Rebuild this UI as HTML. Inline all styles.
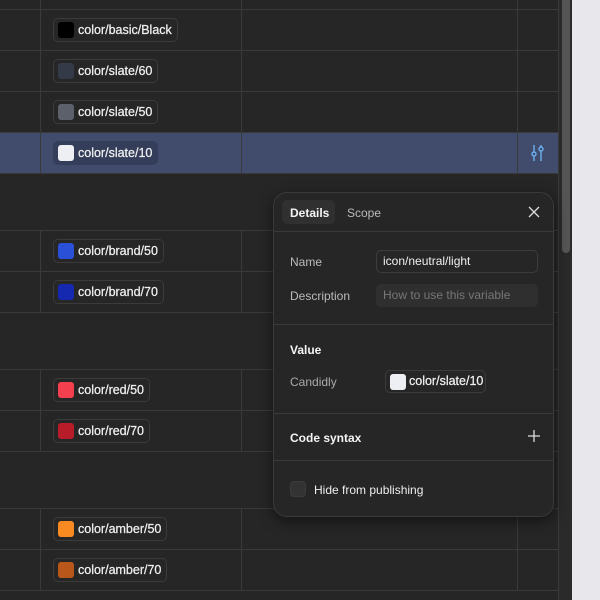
<!DOCTYPE html>
<html><head><meta charset="utf-8"><style>
*{margin:0;padding:0;box-sizing:border-box}
body{width:600px;height:600px;background:#262626;position:relative;overflow:hidden;font-family:"Liberation Sans",sans-serif;color:#eee}
.hl{position:absolute;left:0;width:558px;height:1px;background:#3a3a3a}
.vl{position:absolute;width:1px;background:#3a3a3a}
.chip{position:absolute;left:53px;height:24px;border:1px solid #3b3b3b;border-radius:5px;padding:0 5px 0 24px;font-size:12.5px;line-height:22px;color:#f0f0f0;-webkit-text-stroke:0.25px #f0f0f0}
.chip i{position:absolute;left:4px;top:3px;width:16px;height:16px;border-radius:3px}
.pop{position:absolute;left:273px;top:192px;width:281px;height:325px;background:#262626;border:1px solid #3a3a3a;border-radius:14px;box-shadow:0 4px 14px rgba(0,0,0,.5)}
.pop .t{position:absolute;font-size:12px}
.div{position:absolute;left:0;width:279px;height:1px;background:#3a3a3a}
</style></head><body>
<div style="position:absolute;left:0;top:132px;width:558px;height:41px;background:#414b6b"></div>
<div class="hl" style="top:9px"></div><div class="hl" style="top:50px"></div><div class="hl" style="top:91px"></div><div class="hl" style="top:132px"></div><div class="hl" style="top:173px"></div>
<div class="hl" style="top:230px"></div><div class="hl" style="top:271px"></div><div class="hl" style="top:312px"></div>
<div class="hl" style="top:369px"></div><div class="hl" style="top:410px"></div><div class="hl" style="top:451px"></div>
<div class="hl" style="top:508px"></div><div class="hl" style="top:549px"></div><div class="hl" style="top:590px"></div>
<div class="vl" style="left:40px;top:0;height:173px"></div><div class="vl" style="left:241px;top:0;height:173px"></div><div class="vl" style="left:517px;top:0;height:173px"></div>
<div class="vl" style="left:40px;top:230px;height:82px"></div><div class="vl" style="left:241px;top:230px;height:82px"></div><div class="vl" style="left:517px;top:230px;height:82px"></div>
<div class="vl" style="left:40px;top:369px;height:82px"></div><div class="vl" style="left:241px;top:369px;height:82px"></div><div class="vl" style="left:517px;top:369px;height:82px"></div>
<div class="vl" style="left:40px;top:508px;height:82px"></div><div class="vl" style="left:241px;top:508px;height:82px"></div><div class="vl" style="left:517px;top:508px;height:82px"></div>
<div class="vl" style="left:558px;top:0;height:600px;background:#3a3a3a"></div>
<div style="position:absolute;left:559px;top:0;width:13px;height:600px;background:#2a2a2a"></div>
<div style="position:absolute;left:562px;top:0;width:8px;height:253px;background:#555;border-radius:0 0 4px 4px"></div>
<div style="position:absolute;left:572px;top:0;width:28px;height:600px;background:#e8e8ec"></div>

<div class="chip" style="top:18px"><i style="background:#000"></i>color/basic/Black</div>
<div class="chip" style="top:59px"><i style="background:#343a48"></i>color/slate/60</div>
<div class="chip" style="top:100px"><i style="background:#5b606b"></i>color/slate/50</div>
<div class="chip" style="top:141px;background:#343e5a;border-color:#343e5a"><i style="background:#eeeff3"></i>color/slate/10</div>
<div class="chip" style="top:239px"><i style="background:#2b50d8"></i>color/brand/50</div>
<div class="chip" style="top:280px"><i style="background:#1428b0"></i>color/brand/70</div>
<div class="chip" style="top:378px"><i style="background:#f43f4f"></i>color/red/50</div>
<div class="chip" style="top:419px"><i style="background:#b81c28"></i>color/red/70</div>
<div class="chip" style="top:517px"><i style="background:#f98a22"></i>color/amber/50</div>
<div class="chip" style="top:558px"><i style="background:#b9561a"></i>color/amber/70</div>

<svg style="position:absolute;left:529px;top:144px" width="18" height="18" viewBox="0 0 18 18" fill="none" stroke="#6ab0f0" stroke-width="1.4"><path d="M5 1v7M5 12v5M12 1v2M12 7v10"/><circle cx="5" cy="10" r="2"/><circle cx="12" cy="5" r="2"/></svg>

<div class="pop">
<div style="position:absolute;left:8px;top:7px;width:53px;height:24px;background:#303030;border-radius:5px"></div>
<div class="t" style="left:16px;top:13px;font-weight:bold;color:#f4f4f4">Details</div>
<div class="t" style="left:73px;top:13px;color:#bbb">Scope</div>
<svg style="position:absolute;left:254px;top:13px" width="12" height="12" viewBox="0 0 12 12" stroke="#ddd" stroke-width="1.3"><path d="M1 1l10 10M11 1L1 11"/></svg>
<div class="div" style="top:38px"></div>
<div class="t" style="left:16px;top:62px;color:#bbb">Name</div>
<div style="position:absolute;left:102px;top:57px;width:162px;height:23px;border:1px solid #3c3c3c;border-radius:5px;font-size:12px;line-height:21px;padding-left:6px;color:#f0f0f0">icon/neutral/light</div>
<div class="t" style="left:16px;top:96px;color:#bbb">Description</div>
<div style="position:absolute;left:102px;top:91px;width:162px;height:23px;background:#2f2f2f;border-radius:5px;font-size:12px;line-height:23px;padding-left:7px;color:#777">How to use this variable</div>
<div class="div" style="top:131px"></div>
<div class="t" style="left:16px;top:150px;font-weight:bold;color:#f4f4f4">Value</div>
<div class="t" style="left:16px;top:182px;color:#aaa">Candidly</div>
<div style="position:absolute;left:111px;top:177px;width:101px;height:23px;border:1px solid #3b3b3b;border-radius:5px;font-size:12.5px;line-height:21px;padding-left:23px;color:#f0f0f0;-webkit-text-stroke:0.25px #f0f0f0"><i style="position:absolute;left:4px;top:3px;width:16px;height:16px;border-radius:3px;background:#eeeff3"></i>color/slate/10</div>
<div class="div" style="top:220px"></div>
<div class="t" style="left:16px;top:238px;font-weight:bold;color:#f4f4f4">Code syntax</div>
<svg style="position:absolute;left:254px;top:237px" width="12" height="12" viewBox="0 0 12 12" stroke="#ddd" stroke-width="1.3"><path d="M6 0v12M0 6h12"/></svg>
<div class="div" style="top:267px"></div>
<div style="position:absolute;left:16px;top:288px;width:16px;height:16px;background:#333;border:1px solid #3c3c3c;border-radius:4px"></div>
<div class="t" style="left:40px;top:290px;color:#eee">Hide from publishing</div>
</div>
</body></html>
